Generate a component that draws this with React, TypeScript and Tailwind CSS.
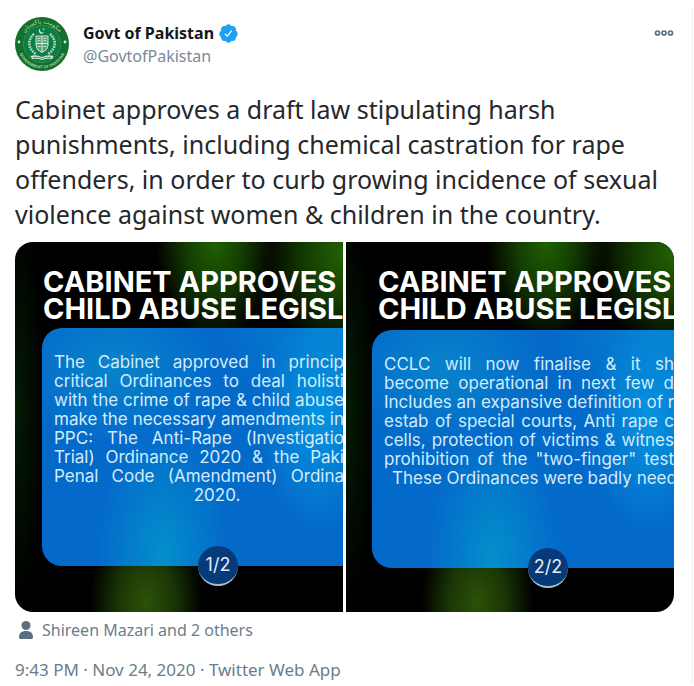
import {FC} from 'react';
import clsx from 'clsx';

type SlideProps = {
  lines: string[];
  lastLine: string;
  page: string;
  titleClassName?: string;
  panelClassName?: string;
  lastLineClassName?: string;
};

const FIRST_SLIDE = [
  'The Cabinet approved in princip',
  'critical Ordinances to deal holisti',
  'with the crime of rape & child abuse',
  'make the necessary amendments in',
  'PPC: The Anti-Rape (Investigatio',
  'Trial) Ordinance 2020 & the Paki',
  'Penal Code (Amendment) Ordina',
];

const SECOND_SLIDE = [
  'CCLC will now finalise & it sh',
  'become operational in next few d',
  'Includes an expansive definition of r',
  'estab of special courts, Anti rape c',
  'cells, protection of victims & witnes',
  'prohibition of the "two-finger" test',
];

const Avatar: FC = () => (
  <svg viewBox="0 0 54 54" className="size-[54px] shrink-0" role="img" aria-label="Govt of Pakistan">
    <defs>
      <path id="rim-top" d="M6.5 27a20.5 20.5 0 0 1 41 0" />
      <path id="rim-bottom" d="M2.6 27a24.4 24.4 0 0 0 48.8 0" />
    </defs>
    <circle cx="27" cy="27" r="27" fill="#12702f" />
    <circle cx="27" cy="27" r="18.6" fill="#0c7d47" stroke="#3f9a55" strokeWidth="0.6" />
    <text fontSize="6" fill="#b9d8a8" fontFamily="DejaVu Sans, sans-serif" textAnchor="middle">
      <textPath href="#rim-top" startOffset="50%">حکومت پاکستان</textPath>
    </text>
    <text fontSize="4" fontWeight="700" fill="#a9d3ae" fontFamily="Liberation Sans, sans-serif" textAnchor="middle">
      <textPath href="#rim-bottom" startOffset="50%">GOVERNMENT OF PAKISTAN</textPath>
    </text>
    <circle cx="4" cy="25" r="1.4" fill="#d7ecd9" />
    <circle cx="50" cy="25" r="1.4" fill="#d7ecd9" />
    <path d="M25.2 11.6a2.7 2.7 0 1 0 4 2.7 2.3 2.3 0 1 1-4-2.7z" fill="#e2f2e4" />
    <circle cx="28.6" cy="12.2" r="0.8" fill="#e2f2e4" />
    <path d="M21 19h12v9.5q0 4.5-6 7-6-2.5-6-7z" fill="#4fa273" stroke="#cfe6d2" strokeWidth="1" />
    <path d="M27 19v16M21 26.5h12" stroke="#d9eddc" strokeWidth="1" />
    <path d="M22.5 21.5h3M22.5 23.8h3M28.5 21.5h3M28.5 23.8h3M23 29.5h2.5M28.5 29.5h2.5" stroke="#e2f2e4" strokeWidth="0.9" />
    <path d="M19 17c-7 6-6 15 2 20M35 17c7 6 6 15-2 20" fill="none" stroke="#b5d9bb" strokeWidth="2.6" strokeDasharray="1.8 0.9" />
    <path d="M15.5 39q5.5-2 11.5 1 6-3 11.5-1l-1.5 3q-5-1-10 1-5-2-10-1z" fill="#cfe6d2" />
    <path d="M18 40.5q5-1 9 1 4-2 9-1" stroke="#0c7d47" strokeWidth="0.7" fill="none" />
  </svg>
);

const VerifiedBadge: FC = () => (
  <svg viewBox="0 0 24 24" className="size-[21px] shrink-0" role="img" aria-label="Verified account">
    <path
      fill="#1da1f2"
      d="M22.5 12.5c0-1.58-.875-2.95-2.148-3.6.154-.435.238-.905.238-1.4 0-2.21-1.71-3.998-3.818-3.998-.47 0-.92.084-1.336.25C14.818 2.415 13.51 1.5 12 1.5s-2.816.917-3.437 2.25c-.415-.165-.866-.25-1.336-.25-2.11 0-3.818 1.79-3.818 4 0 .494.083.964.237 1.4-1.272.65-2.147 2.018-2.147 3.6 0 1.495.782 2.798 1.942 3.486-.02.17-.032.34-.032.514 0 2.21 1.708 4 3.818 4 .47 0 .92-.086 1.335-.25.62 1.334 1.926 2.25 3.437 2.25 1.512 0 2.818-.916 3.437-2.25.415.163.865.248 1.336.248 2.11 0 3.818-1.79 3.818-4 0-.174-.012-.344-.033-.513 1.158-.687 1.943-1.99 1.943-3.484z"
    />
    <path d="M8.3 12.6l2.5 2.5 4.6-6" fill="none" stroke="#fff" strokeWidth="1.4" strokeLinecap="round" strokeLinejoin="round" />
  </svg>
);

const Slide: FC<SlideProps> = ({
  lines,
  lastLine,
  page,
  titleClassName,
  panelClassName,
  lastLineClassName,
}) => (
  <div className="h-full min-w-0 overflow-hidden bg-black bg-[radial-gradient(ellipse_60px_100px_at_61%_0%,#1f6003,#143f02_45%,#00000000),radial-gradient(ellipse_80px_100px_at_100%_3%,#226203,#153f02_45%,#00000000),radial-gradient(ellipse_56px_90px_at_40%_97%,#2a5208,#1b3605_50%,#00000000),radial-gradient(ellipse_30px_200px_at_0%_45%,#041c04,#00000000)] pt-[26px]">
    <h2
      className={clsx(
        "font-['Inter',sans-serif] text-[29px] leading-[27px] font-bold whitespace-nowrap text-white",
        titleClassName
      )}>
      CABINET APPROVES
      <br />
      CHILD ABUSE LEGISLA
    </h2>
    <div
      className={clsx(
        "relative h-[238px] rounded-l-[20px] bg-[#046aca] bg-[radial-gradient(ellipse_100px_75px_at_24%_16%,#0784cb,#0784cb00),radial-gradient(ellipse_60px_110px_at_92%_38%,#0594e0,#0594e000),radial-gradient(ellipse_120px_90px_at_100%_0%,#0583d0,#0583d000),radial-gradient(ellipse_64px_130px_at_40%_96%,#038fca,#038fca00)] pl-3 font-['Inter',sans-serif] text-[17px] leading-[19px] text-[#d3ecfb]",
        panelClassName
      )}>
      {lines.map((line) => (
        <p key={line} className="w-[290px] whitespace-nowrap [text-align-last:justify]">
          {line}
        </p>
      ))}
      <p className={clsx('w-[326px] whitespace-nowrap', lastLineClassName)}>{lastLine}</p>
      <span className="absolute -bottom-5 left-[156px] flex size-10 items-center justify-center rounded-full border-b-2 border-[#a9bfd6] bg-[#063a78] text-lg text-[#e3eef8]">
        {page}
      </span>
    </div>
  </div>
);

const App: FC = () => (
  <main className="bg-white pt-2 font-['Noto_Sans',sans-serif]">
    <article className="mr-px border-r border-[#eef0f2] pt-2 pr-[18px] pb-1 pl-[15px]">
      <header className="flex items-center gap-3.5 pt-px">
        <Avatar />
        <div className="flex-1">
          <div className="flex items-center gap-1">
            <a href="#" className="text-base leading-6 font-bold text-[#14171a]">
              Govt of Pakistan
            </a>
            <VerifiedBadge />
          </div>
          <a href="#" className="block text-base leading-[22px] text-[#7b8a98]">
            @GovtofPakistan
          </a>
        </div>
        <button type="button" aria-label="More" className="mt-2.5 self-start p-0 text-[#5b7083]">
          <svg viewBox="0 0 20 12" className="h-3 w-5" fill="none" stroke="currentColor" strokeWidth="1.7">
            <circle cx="3.5" cy="6" r="2" />
            <circle cx="10" cy="6" r="2" />
            <circle cx="16.5" cy="6" r="2" />
          </svg>
        </button>
      </header>

      <p className="mt-[21px] text-[25px] leading-[35px] text-[#25282b]">
        Cabinet approves a draft law stipulating harsh punishments, including chemical castration
        for rape offenders, in order to curb growing incidence of sexual violence against women
        &amp; children in the country.
      </p>

      <div className="mt-2.5 grid h-[370px] grid-cols-2 gap-[3px] overflow-hidden rounded-[18px]">
        <Slide
          lines={FIRST_SLIDE}
          lastLine="2020."
          page="1/2"
          titleClassName="pl-7"
          panelClassName="ml-[27px] mt-1.5 pt-[25px]"
          lastLineClassName="text-center"
        />
        <Slide
          lines={SECOND_SLIDE}
          lastLine="These Ordinances were badly need"
          page="2/2"
          titleClassName="pl-8"
          panelClassName="ml-[26px] mt-2 pt-[25px]"
          lastLineClassName="pl-2"
        />
      </div>

      <div className="mt-2 flex items-center gap-2 pl-[3px]">
        <svg viewBox="0 0 16 20" className="h-5 w-4 shrink-0" fill="#5b7083">
          <circle cx="8" cy="5.5" r="4.5" />
          <path d="M1 17.2C1 13 3.5 11 8 11s7 2 7 6.2c0 1-.6 1.8-1.6 1.8H2.6C1.6 19 1 18.2 1 17.2z" />
        </svg>
        <a href="#" className="text-base leading-5 text-[#6b7c8c]">
          Shireen Mazari and 2 others
        </a>
      </div>
      <p className="mt-5 text-[17px] leading-5 text-[#6b7c8c]">
        9:43 PM · Nov 24, 2020 · Twitter Web App
      </p>
    </article>
  </main>
);

export default App;
